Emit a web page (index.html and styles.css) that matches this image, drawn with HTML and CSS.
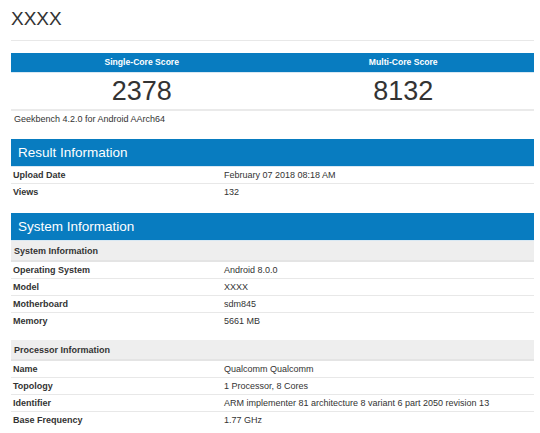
FILE: index.html
```html
<!DOCTYPE html>
<html>
<head>
<meta charset="utf-8">
<link rel="stylesheet" href="styles.css">
</head>
<body>
<div class="page">
  <h1 class="title">XXXX</h1>
  <div class="scores">
    <div class="score">
      <div class="score-head">Single-Core Score</div>
      <div class="score-num">2378</div>
    </div>
    <div class="score">
      <div class="score-head">Multi-Core Score</div>
      <div class="score-num">8132</div>
    </div>
  </div>
  <div class="version">Geekbench 4.2.0 for Android AArch64</div>

  <div class="section">
    <div class="section-head">Result Information</div>
    <div class="row"><div class="key">Upload Date</div><div class="val">February 07 2018 08:18 AM</div></div>
    <div class="row last"><div class="key">Views</div><div class="val">132</div></div>
  </div>

  <div class="section">
    <div class="section-head">System Information</div>
    <div class="sub-head">System Information</div>
    <div class="row"><div class="key">Operating System</div><div class="val">Android 8.0.0</div></div>
    <div class="row"><div class="key">Model</div><div class="val">XXXX</div></div>
    <div class="row"><div class="key">Motherboard</div><div class="val">sdm845</div></div>
    <div class="row last"><div class="key">Memory</div><div class="val">5661 MB</div></div>
    <div class="sub-head spaced">Processor Information</div>
    <div class="row"><div class="key">Name</div><div class="val">Qualcomm Qualcomm</div></div>
    <div class="row"><div class="key">Topology</div><div class="val">1 Processor, 8 Cores</div></div>
    <div class="row"><div class="key">Identifier</div><div class="val">ARM implementer 81 architecture 8 variant 6 part 2050 revision 13</div></div>
    <div class="row last"><div class="key">Base Frequency</div><div class="val">1.77 GHz</div></div>
  </div>
</div>
</body>
</html>
```

FILE: styles.css
```css
* { box-sizing: border-box; }
html, body { margin: 0; padding: 0; background: #fff; }
body {
  font-family: "Liberation Sans", Arial, sans-serif;
  color: #333;
  font-size: 9px;
}
.page {
  width: 523px;
  margin-left: 11px;
}
.title {
  margin: 0;
  height: 41px;
  padding-top: 8px;
  font-size: 19px;
  line-height: 22px;
  font-weight: normal;
  border-bottom: 1px solid #e8e8e8;
}
.scores {
  display: flex;
  margin-top: 12px;
  border-bottom: 2px solid #eaeaea;
}
.score { flex: 1; }
.score-head {
  background: #087cc0;
  color: #fff;
  font-weight: bold;
  font-size: 8.6px;
  text-align: center;
  height: 20px;
  line-height: 19px;
  border-bottom: 1px solid #d8e8f3;
}
.score-num {
  text-align: center;
  font-size: 27px;
  height: 36px;
  line-height: 36px;
}
.version {
  padding-left: 3px;
  height: 17px;
  line-height: 16px;
}
.section { margin-top: 11px; }
.section + .section { margin-top: 12px; }
.section-head {
  background: #087cc0;
  color: #fff;
  font-size: 13.5px;
  height: 28px;
  line-height: 27px;
  padding-left: 7px;
  border-bottom: 1px solid #d8e8f3;
}
.sub-head {
  background: #eeeeee;
  font-weight: bold;
  height: 21px;
  line-height: 20px;
  padding-left: 3px;
  border-bottom: 2px solid #e4e4e4;
}
.sub-head.spaced { margin-top: 10px; }
.row {
  display: flex;
  height: 17px;
  line-height: 16px;
  border-bottom: 1px solid #e8e8e8;
}
.row.last { border-bottom: none; }
.key {
  width: 213px;
  padding-left: 2px;
  font-weight: bold;
}
.val { flex: 1; }
```
